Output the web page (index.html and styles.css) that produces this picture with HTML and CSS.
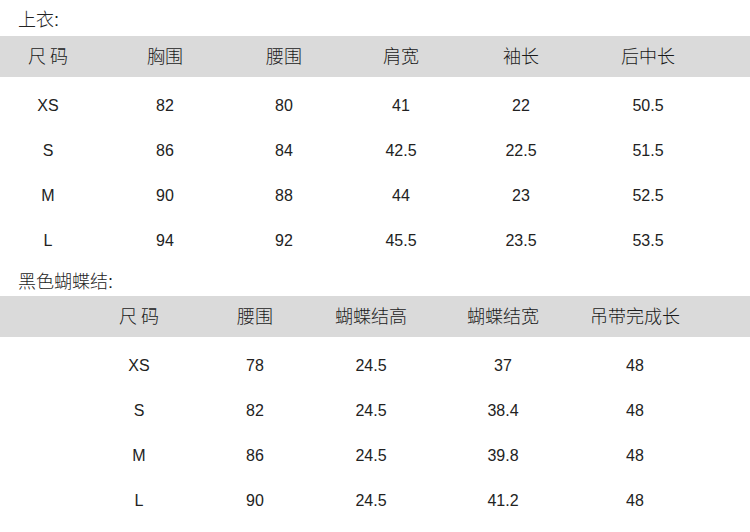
FILE: index.html
```html
<!DOCTYPE html>
<html lang="zh">
<head>
<meta charset="utf-8">
<link rel="stylesheet" href="styles.css">
</head>
<body>
<div class="page">
  <div class="title t1">上衣:</div>
  <div class="table top">
    <div class="row head">
      <div>尺 码</div><div>胸围</div><div>腰围</div><div>肩宽</div><div>袖长</div><div>后中长</div>
    </div>
    <div class="body">
      <div class="row"><div>XS</div><div>82</div><div>80</div><div>41</div><div>22</div><div>50.5</div></div>
      <div class="row"><div>S</div><div>86</div><div>84</div><div>42.5</div><div>22.5</div><div>51.5</div></div>
      <div class="row"><div>M</div><div>90</div><div>88</div><div>44</div><div>23</div><div>52.5</div></div>
      <div class="row"><div>L</div><div>94</div><div>92</div><div>45.5</div><div>23.5</div><div>53.5</div></div>
    </div>
  </div>
  <div class="title t2">黑色蝴蝶结:</div>
  <div class="table bow">
    <div class="row head">
      <div>尺 码</div><div>腰围</div><div>蝴蝶结高</div><div>蝴蝶结宽</div><div>吊带完成长</div>
    </div>
    <div class="body">
      <div class="row"><div>XS</div><div>78</div><div>24.5</div><div>37</div><div>48</div></div>
      <div class="row"><div>S</div><div>82</div><div>24.5</div><div>38.4</div><div>48</div></div>
      <div class="row"><div>M</div><div>86</div><div>24.5</div><div>39.8</div><div>48</div></div>
      <div class="row"><div>L</div><div>90</div><div>24.5</div><div>41.2</div><div>48</div></div>
    </div>
  </div>
</div>
</body>
</html>
```
FILE: styles.css
```css
html, body {
  margin: 0;
  padding: 0;
  background: #ffffff;
}
body {
  width: 750px;
  height: 532px;
  overflow: hidden;
  font-family: "Liberation Sans", Arial, "Noto Sans CJK SC", sans-serif;
  color: #222222;
}
.title {
  padding-left: 18px;
  font-size: 18px;
  font-weight: 300;
  font-family: "Liberation Sans", "Noto Sans CJK SC", sans-serif;
  display: flex;
  align-items: center;
}
.t1 { height: 36px; }
.t2 { height: 33px; }
.row {
  display: grid;
  align-items: center;
  justify-items: center;
}
.row > div { white-space: nowrap; }
.head {
  height: 41px;
  box-sizing: border-box;
  padding-bottom: 3px;
  background: #dadada;
  font-size: 18px;
  font-family: "Noto Sans CJK SC", sans-serif;
  font-weight: 300;
  color: #1a1a1a;
}
.body {
  padding-top: 6px;
}
.body .row {
  height: 45px;
  font-size: 16px;
}
.top .row {
  grid-template-columns: 96px 138px 100px 134px 106px 148px 1fr;
}
.bow .row {
  grid-template-columns: 118px 114px 118px 146px 118px 1fr;
  padding-left: 80px;
}
```
